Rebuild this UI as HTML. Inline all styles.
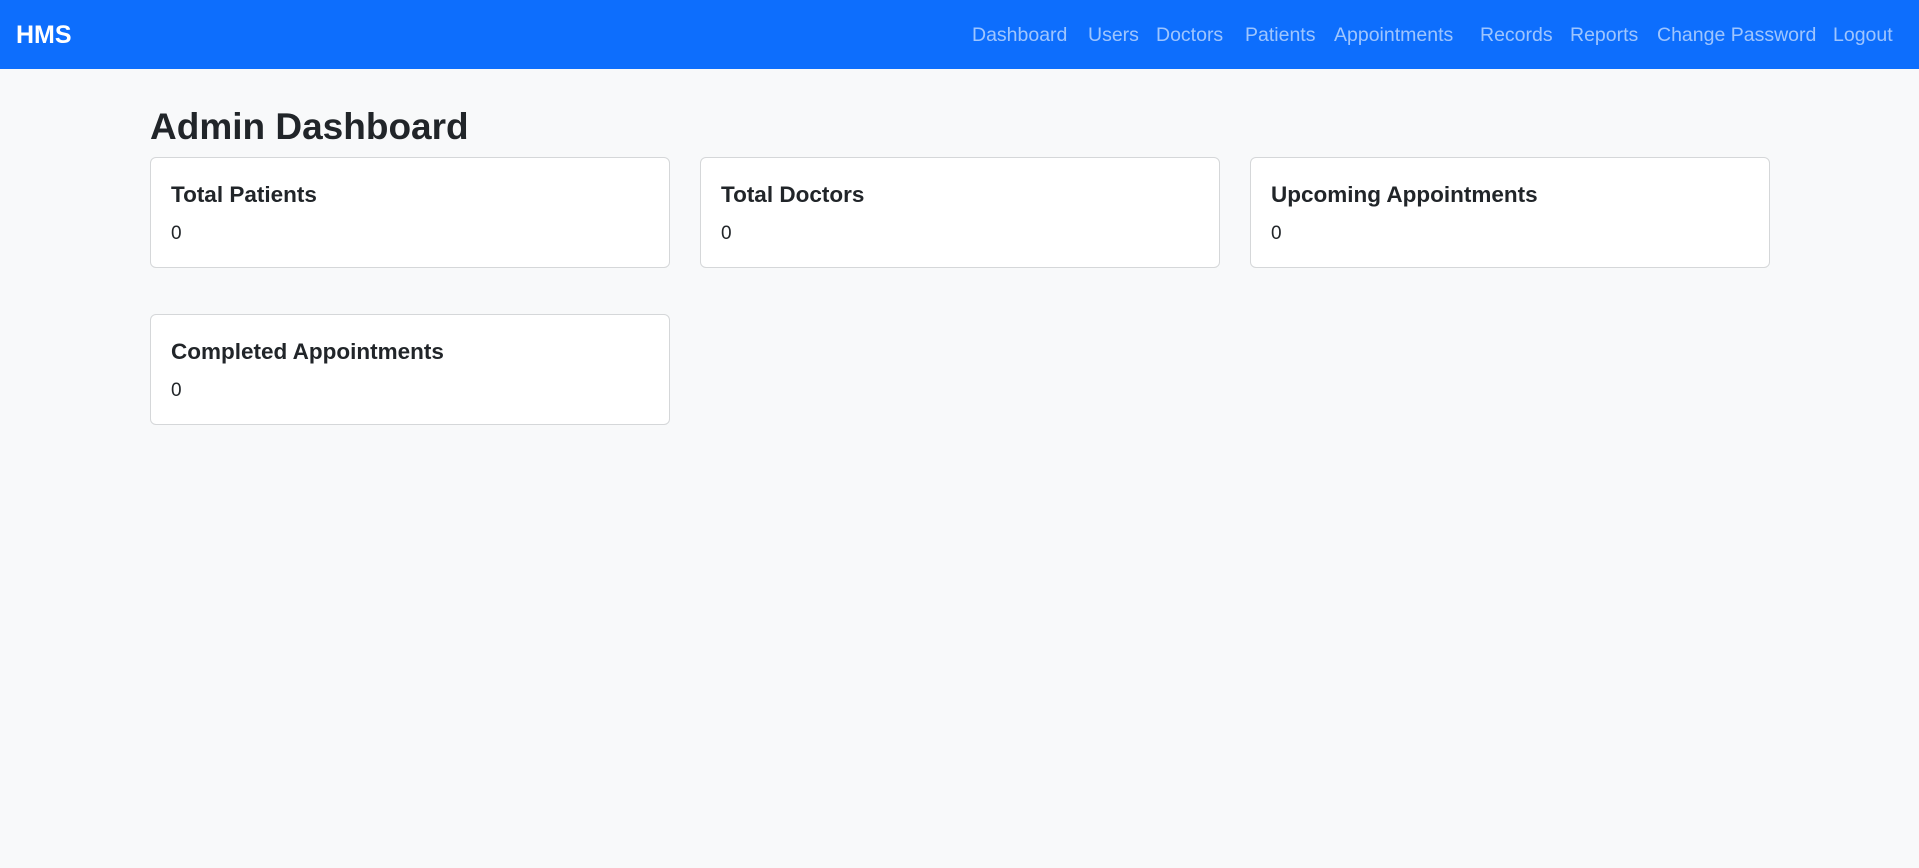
<!DOCTYPE html>
<html><head><meta charset="utf-8"><style>
*{box-sizing:border-box;margin:0;padding:0}
body{width:1919px;height:868px;background:#f8f9fa;font-family:"Liberation Sans",sans-serif;color:#212529;position:relative;overflow:hidden}
.nav{position:absolute;left:0;top:0;width:1919px;height:69px;background:#0d6efd}
.brand{position:absolute;left:16px;top:20px;font-size:25px;font-weight:bold;color:#fff;line-height:30px}
.nav a{position:absolute;top:23px;font-size:19.5px;line-height:24px;color:rgba(255,255,255,.6);text-decoration:none;white-space:nowrap}
h1{position:absolute;left:150px;top:103px;font-size:37px;font-weight:bold;line-height:48px}
.card{position:absolute;width:520px;height:111px;background:#fff;border:1px solid #d5d7d9;border-radius:6px}
.card h5{position:absolute;left:20px;top:22px;font-size:22.5px;font-weight:bold;line-height:30px;white-space:nowrap}
.card p{position:absolute;left:20px;top:64px;font-size:19px;line-height:24px}
</style></head><body>
<div class="nav">
<div class="brand">HMS</div>
<a style="left:972px">Dashboard</a>
<a style="left:1088px">Users</a>
<a style="left:1156px">Doctors</a>
<a style="left:1245px">Patients</a>
<a style="left:1334px">Appointments</a>
<a style="left:1480px">Records</a>
<a style="left:1570px">Reports</a>
<a style="left:1657px">Change Password</a>
<a style="left:1833px">Logout</a>
</div>
<h1>Admin Dashboard</h1>
<div class="card" style="left:150px;top:157px"><h5>Total Patients</h5><p>0</p></div>
<div class="card" style="left:700px;top:157px"><h5>Total Doctors</h5><p>0</p></div>
<div class="card" style="left:1250px;top:157px"><h5>Upcoming Appointments</h5><p>0</p></div>
<div class="card" style="left:150px;top:314px"><h5>Completed Appointments</h5><p>0</p></div>
</body></html>
